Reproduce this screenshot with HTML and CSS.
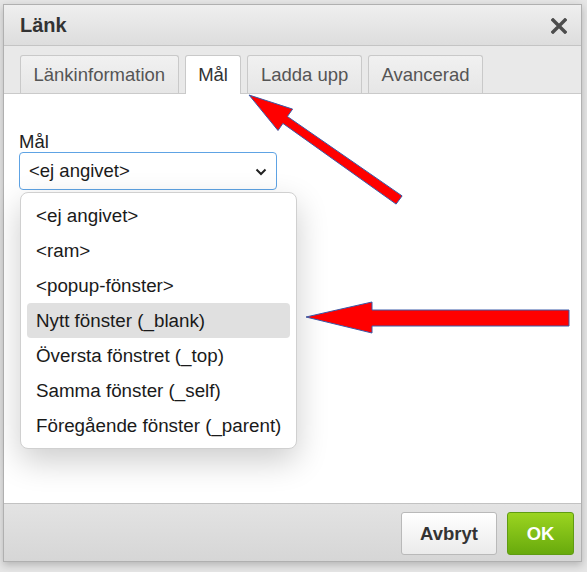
FILE: index.html
```html
<!DOCTYPE html>
<html lang="sv">

<head>
    <meta charset="UTF-8">
    <meta name="viewport" content="width=device-width, initial-scale=1.0">
    <title>Länk</title>
    <link rel="stylesheet" href="styles.css">
</head>

<body>
    <div class="dialog">
        <div class="dialog-title">
            <span>Länk</span>
            <span class="close">
                <svg width="16" height="16" viewBox="0 0 16 16">
                    <path d="M2 2 L14 14 M14 2 L2 14" stroke="#4d4d4d" stroke-width="3.4" stroke-linecap="square" />
                </svg>
            </span>
        </div>

        <ul class="tabs">
            <li class="tab">Länkinformation</li>
            <li class="tab active">Mål</li>
            <li class="tab">Ladda upp</li>
            <li class="tab">Avancerad</li>
        </ul>

        <div class="dialog-body">
            <label class="field-label">Mål</label>
            <div class="select-wrap">
                <div class="select">
                    <span>&lt;ej angivet&gt;</span>
                    <svg width="12" height="8" viewBox="0 0 12 8">
                        <path d="M1.5 1.5 L6 6 L10.5 1.5" fill="none" stroke="#222" stroke-width="2" />
                    </svg>
                </div>

                <!-- open dropdown list -->
                <ul class="options">
                    <li>&lt;ej angivet&gt;</li>
                    <li>&lt;ram&gt;</li>
                    <li>&lt;popup-fönster&gt;</li>
                    <li class="hover">Nytt fönster (_blank)</li>
                    <li>Översta fönstret (_top)</li>
                    <li>Samma fönster (_self)</li>
                    <li>Föregående fönster (_parent)</li>
                </ul>
            </div>
        </div>

        <div class="dialog-footer">
            <button class="btn">Avbryt</button>
            <button class="btn btn-ok">OK</button>
        </div>
    </div>

    <!-- annotation arrows -->
    <svg class="arrows" width="587" height="572" viewBox="0 0 587 572">
        <polygon points="249,95 292.6,109.1 287.4,116.5 402.1,195.9 396.1,204.1 282.9,123.4 278,130.5"
            fill="#ff0000" stroke="#3a5aa8" stroke-width="1" />
        <polygon points="306,317 372,302 372,310 569,310 569,326 372,326 372,333"
            fill="#ff0000" stroke="#3a5aa8" stroke-width="1" />
    </svg>
</body>

</html>
```

FILE: styles.css
```css
body {
    margin: 0;
    padding-top: 4px;
    width: 587px;
    height: 572px;
    overflow: hidden;
    position: relative;
    box-sizing: border-box;
    background: #e6e6e6;
    font-family: "Liberation Sans", Arial, sans-serif;
}

.dialog {
    margin-left: 3px;
    width: 579px;
    height: 558px;
    box-sizing: border-box;
    border: 1px solid #b0b0b0;
    display: flex;
    flex-direction: column;
    background: #fff;
    box-shadow: 0 3px 8px rgba(0, 0, 0, 0.22);
}

.dialog-title {
    height: 41px;
    box-sizing: border-box;
    border-bottom: 1px solid #c4c4c4;
    background: linear-gradient(#efefef, #dddddd);
    display: flex;
    align-items: center;
    justify-content: space-between;
    padding: 1px 14px 0 16px;
    font-size: 20px;
    font-weight: bold;
    color: #333;
}

.close {
    display: flex;
    margin-top: 1px;
}

/* Tabs */
.tabs {
    list-style: none;
    margin: 0;
    height: 48px;
    box-sizing: border-box;
    padding: 9px 16px 0;
    display: flex;
    align-items: flex-start;
    gap: 6px;
    background: #e9e9e9;
    border-bottom: 1px solid #cacaca;
}

.tab {
    height: 38px;
    box-sizing: border-box;
    padding: 0 12.5px;
    border: 1px solid #c9c9c9;
    border-bottom: none;
    border-radius: 3px 3px 0 0;
    background: linear-gradient(#f1f1f1, #e6e6e6);
    font-size: 18.5px;
    line-height: 37px;
    color: #555;
}

.tab.active {
    height: 39px;
    margin-bottom: -1px;
    background: #fff;
    color: #333;
}

/* Body */
.dialog-body {
    flex: 1;
    padding: 37px 15px 0;
    background: #fff;
}

.field-label {
    display: block;
    font-size: 18.5px;
    line-height: 21px;
    color: #222;
}

.select-wrap {
    position: relative;
    width: 258px;
}

.select {
    height: 38px;
    box-sizing: border-box;
    border: 1px solid #5ea3e4;
    border-radius: 4px;
    padding: 0 9px 0 9px;
    display: flex;
    align-items: center;
    justify-content: space-between;
    font-size: 18.5px;
    color: #1a1a1a;
}

.select svg {
    margin-top: 2px;
}

.options {
    position: absolute;
    left: 1px;
    top: 40px;
    width: 277px;
    box-sizing: border-box;
    margin: 0;
    padding: 5px 6px;
    list-style: none;
    background: #fff;
    border: 1px solid #d0d0d0;
    border-radius: 8px;
    box-shadow: 0 12px 32px rgba(0, 0, 0, 0.2);
}

.options li {
    height: 35px;
    line-height: 35px;
    padding-left: 9px;
    border-radius: 4px;
    font-size: 18.8px;
    color: #1a1a1a;
    white-space: nowrap;
}

.options li.hover {
    background: #e0e0e0;
}

/* Footer */
.dialog-footer {
    height: 58px;
    box-sizing: border-box;
    border-top: 1px solid #c2c2c2;
    background: linear-gradient(#e3e3e3, #d6d6d6);
    display: flex;
    justify-content: flex-end;
    align-items: flex-start;
    gap: 10px;
    padding: 8px 7px 0;
}

.btn {
    height: 43px;
    padding: 0 18px;
    border: 1px solid #b9b9b9;
    border-radius: 3px;
    background: linear-gradient(#ffffff, #ebebeb);
    font-family: "Liberation Sans", Arial, sans-serif;
    font-size: 18.5px;
    font-weight: bold;
    color: #333;
}

.btn-ok {
    min-width: 67px;
    border-color: #5f9c12;
    background: linear-gradient(#9bd420, #68aa0d);
    color: #fff;
}

.arrows {
    position: absolute;
    left: 0;
    top: 0;
    pointer-events: none;
}
```
